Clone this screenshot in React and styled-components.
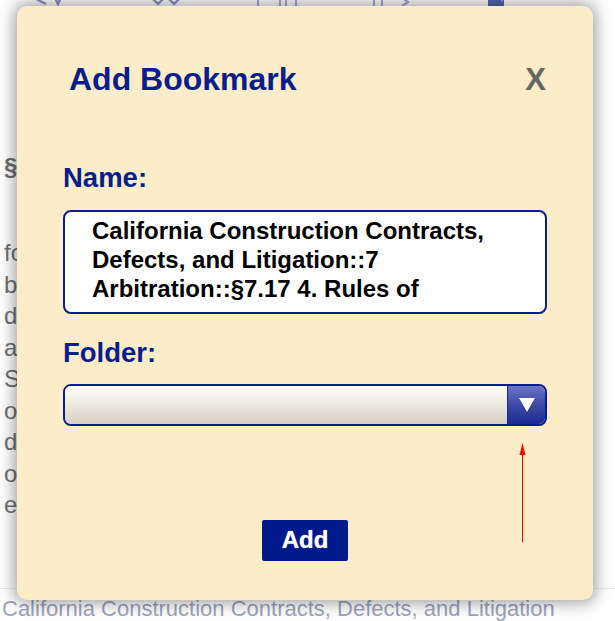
import React from "react";
import styled, { createGlobalStyle } from "styled-components";

const Global = createGlobalStyle`
  html, body { margin: 0; padding: 0; background: #ffffff; }
  body { font-family: "Liberation Sans", Arial, sans-serif; }
  * { box-sizing: border-box; }
`;

const Page = styled.div`
  position: relative;
  width: 615px;
  height: 621px;
  overflow: hidden;
  background: #ffffff;
  display: flex;
  flex-direction: column;
  font-family: "Liberation Sans", Arial, sans-serif;
`;

const Toolbar = styled.div`
  height: 6px;
  overflow: hidden;
  display: flex;
  align-items: flex-end;
  flex-shrink: 0;
`;

const ToolIcon = styled.svg`
  flex-shrink: 0;
  margin-left: ${(p) => p.$gap}px;
  display: block;
`;

const Article = styled.div`
  width: 17px;
  overflow: hidden;
  padding-left: 4px;
  color: #707070;
  font-size: 24px;
  white-space: nowrap;
`;

const Heading = styled.div`
  margin-top: 145px;
  font-weight: bold;
  line-height: 32px;
`;

const Paragraph = styled.div`
  margin-top: 54px;
  line-height: 31.5px;
`;

const Footer = styled.div`
  margin-top: auto;
  border-top: 1px solid #ececec;
  padding: 8px 0 0 2px;
  height: 33px;
  font-size: 22px;
  line-height: 24px;
  color: #9ea4bd;
  white-space: nowrap;
`;

const Dialog = styled.div`
  position: absolute;
  left: 17px;
  top: 6px;
  width: 576px;
  height: 594px;
  background: #fbedc7;
  border-radius: 10px;
  box-shadow: 0 0 16px 3px rgba(0, 0, 0, 0.38);
  padding: 55px 46px 39px 46px;
  display: flex;
  flex-direction: column;
`;

const Header = styled.div`
  display: flex;
  justify-content: space-between;
  align-items: center;
  height: 37px;
  padding-left: 6px;
`;

const Title = styled.h1`
  margin: 0;
  font-size: 32px;
  line-height: 37px;
  font-weight: bold;
  color: #0a1d8c;
`;

const Close = styled.button`
  border: none;
  background: none;
  padding: 0;
  margin-right: 1px;
  font-family: "Liberation Sans", Arial, sans-serif;
  font-size: 31px;
  font-weight: bold;
  color: #666666;
  cursor: pointer;
`;

const Label = styled.label`
  display: block;
  margin-top: ${(p) => p.$top}px;
  font-size: 27.5px;
  line-height: 31px;
  font-weight: bold;
  color: #0a1d8c;
`;

const NameArea = styled.textarea`
  display: block;
  margin-top: 16.5px;
  width: 484px;
  height: 104px;
  border: 2px solid #0a1d8c;
  border-radius: 8px;
  background: #ffffff;
  padding: 4px 20px 0 27px;
  font-family: "Liberation Sans", Arial, sans-serif;
  font-size: 24px;
  font-weight: bold;
  line-height: 29px;
  color: #000000;
  resize: none;
  overflow: hidden;
  outline: none;
`;

const SelectBox = styled.div`
  margin-top: 15.5px;
  width: 484px;
  height: 42px;
  border: 2px solid #0a1d8c;
  border-radius: 8px;
  overflow: hidden;
  display: flex;
`;

const SelectField = styled.div`
  flex: 1;
  background: linear-gradient(to bottom, #fefdfa 0%, #f2efe6 35%, #d4d0c3 100%);
`;

const SelectArrow = styled.div`
  width: 38px;
  border-left: 1px solid #1a2a8a;
  background: linear-gradient(to bottom, #6a75c4 0%, #3c4aa6 50%, #1b2b90 100%);
  display: flex;
  align-items: center;
  justify-content: center;
`;

const AddButton = styled.button`
  align-self: center;
  margin-top: 94px;
  width: 86px;
  height: 41px;
  border: none;
  border-radius: 2px;
  background: #001a8c;
  color: #ffffff;
  font-family: "Liberation Sans", Arial, sans-serif;
  font-size: 24px;
  font-weight: bold;
  text-shadow: 0 0 1px rgba(255, 255, 255, 0.8);
  cursor: pointer;
`;

const Annotation = styled.svg`
  position: absolute;
  left: 519px;
  top: 443px;
`;

const nameText =
  "California Construction Contracts, Defects, and Litigation::7 Arbitration::§7.17 4. Rules of";

export default function App() {
  return (
    <>
      <Global />
      <Page>
        <Toolbar>
          <ToolIcon $gap={36} width="40" height="30" viewBox="0 0 40 30">
            <path d="M10 4 L2 24 L10 28 M14 10 L22 28 L30 10" fill="none" stroke="#8a94cc" strokeWidth="2.5" />
          </ToolIcon>
          <ToolIcon $gap={68} width="42" height="30" viewBox="0 0 42 30">
            <path d="M4 18 L14 28 L20 22 M24 22 L30 28 L40 18" fill="none" stroke="#8a94cc" strokeWidth="2.5" />
          </ToolIcon>
          <ToolIcon $gap={70} width="46" height="30" viewBox="0 0 46 30">
            <rect x="2" y="4" width="22" height="30" fill="none" stroke="#a6acd0" strokeWidth="2" />
            <path d="M30 2 L30 30 M40 2 L40 30" fill="none" stroke="#a6acd0" strokeWidth="2" />
          </ToolIcon>
          <ToolIcon $gap={66} width="46" height="30" viewBox="0 0 46 30">
            <path d="M6 2 L6 30 M14 2 L14 30" fill="none" stroke="#a6acd0" strokeWidth="2" />
            <path d="M34 22 L40 26 L34 30" fill="none" stroke="#98a0cc" strokeWidth="2" />
          </ToolIcon>
          <ToolIcon $gap={72} width="22" height="30" viewBox="0 0 22 30">
            <rect x="2" y="0" width="16" height="30" fill="#5a66ae" />
            <path d="M12 18 L16 26 L20 18" fill="#a6acd0" />
          </ToolIcon>
        </Toolbar>
        <Article>
          <Heading>§ 7.17 4. Rules of Arbitration</Heading>
          <Paragraph>
            <div>for a construction contract, the parties may agree</div>
            <div>by contract that the arbitration shall proceed</div>
            <div>designated rules. The most commonly used rules</div>
            <div>are the Construction Industry Arbitration Rules</div>
            <div>Significantly, these rules allow the arbitrator</div>
            <div>order discovery and to rule on motions that</div>
            <div>dispose of claims, and to decide questions</div>
            <div>of arbitrability and the scope of the</div>
            <div>entire arbitration agreement.</div>
          </Paragraph>
        </Article>
        <Footer>California Construction Contracts, Defects, and Litigation</Footer>

        <Dialog role="dialog" aria-label="Add Bookmark">
          <Header>
            <Title>Add Bookmark</Title>
            <Close type="button">X</Close>
          </Header>
          <Label $top={64} htmlFor="bm-name">Name:</Label>
          <NameArea id="bm-name" readOnly defaultValue={nameText} />
          <Label $top={23.5}>Folder:</Label>
          <SelectBox role="combobox">
            <SelectField />
            <SelectArrow>
              <svg width="20" height="18" viewBox="0 0 20 18">
                <polygon points="2,3 18,3 10,17" fill="#101850" opacity="0.5" />
                <polygon points="2,2 18,2 10,16" fill="#ffffff" />
              </svg>
            </SelectArrow>
          </SelectBox>
          <AddButton type="button">Add</AddButton>
        </Dialog>

        <Annotation width="7" height="99" viewBox="0 0 7 99">
          <polygon points="3.5,0 0.5,12 6.5,12" fill="#ff0000" />
          <line x1="3.5" y1="10" x2="3.5" y2="99" stroke="#ff0000" strokeWidth="1" />
        </Annotation>
      </Page>
    </>
  );
}
